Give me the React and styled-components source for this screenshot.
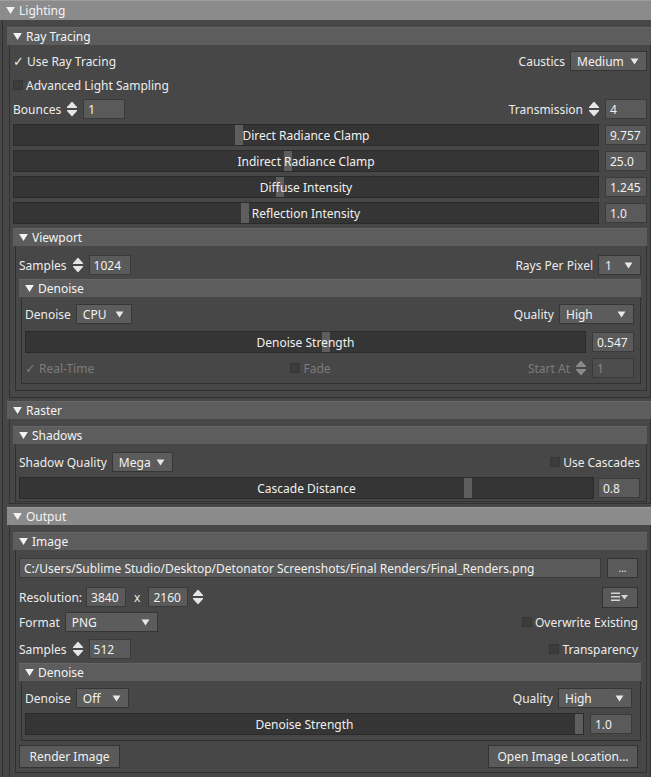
import React from "react";
import styled, { createGlobalStyle } from "styled-components";

const GlobalStyle = createGlobalStyle`
  html, body { margin: 0; padding: 0; background: #474747; }
  body {
    font-family: "Noto Sans", "Open Sans", sans-serif;
    font-size: 12px;
    color: #ececec;
  }
`;

const Panel = styled.div`
  width: 651px;
  height: 777px;
  overflow: hidden;
  background: #474747;
`;

const Wrap = styled.div`
  display: flex;
  flex-direction: column;
`;

const Header = styled.div`
  height: ${(p) => (p.$level === 0 ? 20 : 18)}px;
  display: flex;
  align-items: center;
  gap: 4px;
  padding-left: 6px;
  font-size: 12px;
  color: #f4f4f4;
  background: ${(p) => (p.$tone === "bright" ? "#8b8b8b" : "#5d5d5d")};
  border-top: 1px solid ${(p) => (p.$tone === "bright" ? "#9e9e9e" : "#656565")};
  box-sizing: border-box;
`;

const Body = styled.div`
  display: flex;
  flex-direction: column;
  gap: ${(p) => p.$gap}px;
  margin-left: 2px;
  padding: ${(p) => p.$pt}px ${(p) => p.$pr}px ${(p) => p.$pb}px ${(p) => p.$pl}px;
  border-left: 1px solid #313131;
  border-right: ${(p) => (p.$level === 0 ? "none" : "1px solid #313131")};
  border-bottom: 1px solid #313131;
`;

const Row = styled.div`
  display: flex;
  align-items: center;
  height: ${(p) => p.$h || 20}px;
  flex: none;
  gap: ${(p) => (p.$gap === undefined ? 5 : p.$gap)}px;
  margin-top: ${(p) => p.$mt || 0}px;
  padding-right: ${(p) => p.$pr || 0}px;
  color: ${(p) => (p.$disabled ? "#7c7c7c" : "inherit")};
  white-space: nowrap;
`;

const Spacer = styled.div`
  flex: 1;
`;

const Third = styled.div`
  flex: 1;
  display: flex;
  align-items: center;
  justify-content: ${(p) => p.$justify || "flex-start"};
  gap: 5px;
`;

const Middle = styled.div`
  margin-right: 38px;
  display: flex;
  align-items: center;
`;

const Label = styled.span`
  white-space: nowrap;
  margin: 0 ${(p) => p.$mx || 0}px;
`;

const CheckWrap = styled.label`
  display: inline-flex;
  align-items: center;
  gap: 3px;
  white-space: nowrap;
`;

const Box = styled.span`
  width: 10px;
  height: 10px;
  background: #3c3c3c;
  border: 1px solid #363636;
  box-sizing: border-box;
`;

const Tick = styled.span`
  width: 11px;
  font-family: "DejaVu Sans", sans-serif;
  font-size: 13px;
  line-height: 1;
`;

const Field = styled.div`
  width: ${(p) => (p.$w ? `${p.$w}px` : "auto")};
  flex: ${(p) => (p.$grow ? 1 : "none")};
  height: 20px;
  box-sizing: border-box;
  display: flex;
  align-items: center;
  padding-left: 4px;
  background: ${(p) => (p.$disabled ? "#4d4d4d" : "#5a5a5a")};
  color: ${(p) => (p.$disabled ? "#888" : "#f0f0f0")};
  border: 1px solid #3a3a3a;
  overflow: hidden;
  white-space: nowrap;
`;

const Select = styled.div`
  width: ${(p) => p.$w}px;
  height: 20px;
  box-sizing: border-box;
  display: flex;
  align-items: center;
  justify-content: space-between;
  padding: 0 7px 0 6px;
  background: #5c5c5c;
  border: 1px solid #363636;
  color: #f2f2f2;
`;

const Track = styled.div`
  position: relative;
  flex: 1;
  height: 22px;
  box-sizing: border-box;
  background: #353535;
  border: 1px solid #2b2b2b;
  display: flex;
  align-items: center;
  justify-content: center;
`;

const Handle = styled.div`
  position: absolute;
  top: 0;
  bottom: 0;
  width: 8px;
  background: #5e5e5e;
`;

const TrackText = styled.span`
  position: relative;
  color: #f0f0f0;
`;

const Button = styled.div`
  height: ${(p) => p.$h || 23}px;
  box-sizing: border-box;
  display: flex;
  align-items: center;
  justify-content: center;
  padding: 0 ${(p) => (p.$px === undefined ? 12 : p.$px)}px;
  width: ${(p) => (p.$w ? `${p.$w}px` : "auto")};
  background: #5a5a5a;
  border: 1px solid #333;
  color: #f0f0f0;
  font-size: ${(p) => p.$fs || 12}px;
`;

const Caret = () => (
  <svg width="9" height="7" viewBox="0 0 10 8">
    <polygon points="0,0 10,0 5,8" fill="#f2f2f2" />
  </svg>
);

const SmallCaret = () => (
  <svg width="9" height="7" viewBox="0 0 10 8">
    <polygon points="0.5,0.5 9.5,0.5 5,7.5" fill="#e8e8e8" />
  </svg>
);

const Spin = ({ dim }) => {
  const c = dim ? "#8a8a8a" : "#e6e6e6";
  return (
    <svg width="12" height="18" viewBox="0 0 12 18">
      <path d="M1.5 7.5 L6 2.5 L10.5 7.5 Z M1.5 10.5 L6 15.5 L10.5 10.5 Z" fill={c} stroke={c} strokeLinejoin="round" strokeWidth="1.2" />
    </svg>
  );
};

const MenuIcon = () => (
  <svg width="20" height="12" viewBox="0 0 20 12">
    <rect x="1" y="1.5" width="9" height="1.5" fill="#d6d6d6" />
    <rect x="1" y="5" width="9" height="1.5" fill="#d6d6d6" />
    <rect x="1" y="8.5" width="9" height="1.5" fill="#d6d6d6" />
    <polygon points="11,4 18,4 14.5,8.5" fill="#d6d6d6" />
  </svg>
);

function Section({ title, level, tone = "mid", gap = 4, pt = 7, pb = 4, pl = 3, pr = 3, children }) {
  return (
    <Wrap>
      <Header $level={level} $tone={tone}>
        <Caret />
        {title}
      </Header>
      <Body $level={level} $gap={gap} $pt={pt} $pb={pb} $pl={pl} $pr={pr}>
        {children}
      </Body>
    </Wrap>
  );
}

function Check({ checked, children }) {
  return (
    <CheckWrap>
      {checked ? <Tick>✓</Tick> : <Box />}
      {children}
    </CheckWrap>
  );
}

function Dropdown({ w, value }) {
  return (
    <Select $w={w}>
      <span>{value}</span>
      <SmallCaret />
    </Select>
  );
}

function Slider({ label, value, f, gap = 6, w = 42, mt }) {
  return (
    <Row $h={22} $gap={gap} $mt={mt}>
      <Track>
        <Handle style={{ left: `calc(${f * 100}% - ${f * 8}px)` }} />
        <TrackText>{label}</TrackText>
      </Track>
      <Field $w={w}>{value}</Field>
    </Row>
  );
}

export default function App() {
  return (
    <Panel>
      <GlobalStyle />
      <Section title="Lighting" level={0} tone="bright" gap={3} pt={7} pb={0} pl={4} pr={0}>
        <Section title="Ray Tracing" level={1} gap={4} pt={6} pb={6} pl={3} pr={3}>
          <Row>
            <Check checked>Use Ray Tracing</Check>
            <Spacer />
            <Label>Caustics</Label>
            <Dropdown w={77} value="Medium" />
          </Row>
          <Row>
            <Check>Advanced Light Sampling</Check>
          </Row>
          <Row>
            <Label>Bounces</Label>
            <Spin />
            <Field $w={42}>1</Field>
            <Spacer />
            <Label>Transmission</Label>
            <Spin />
            <Field $w={42}>4</Field>
          </Row>
          <Slider label="Direct Radiance Clamp" value="9.757" f={0.384} mt={1} />
          <Slider label="Indirect Radiance Clamp" value="25.0" f={0.469} />
          <Slider label="Diffuse Intensity" value="1.245" f={0.454} />
          <Slider label="Reflection Intensity" value="1.0" f={0.394} />
          <Section title="Viewport" level={2} gap={4} pt={9} pb={6} pl={3} pr={5}>
            <Row>
              <Label>Samples</Label>
              <Spin />
              <Field $w={42}>1024</Field>
              <Spacer />
              <Label>Rays Per Pixel</Label>
              <Dropdown w={43} value="1" />
            </Row>
            <Section title="Denoise" level={3} gap={5} pt={7} pb={5} pl={3} pr={6}>
              <Row>
                <Label>Denoise</Label>
                <Dropdown w={56} value="CPU" />
                <Spacer />
                <Label>Quality</Label>
                <Dropdown w={75} value="High" />
              </Row>
              <Slider label="Denoise Strength" value="0.547" f={0.537} mt={2} />
              <Row $disabled>
                <Third>
                  <Check checked>Real-Time</Check>
                </Third>
                <Middle>
                  <Check>Fade</Check>
                </Middle>
                <Third $justify="flex-end">
                  <Label>Start At</Label>
                  <Spin dim />
                  <Field $w={42} $disabled>1</Field>
                </Third>
              </Row>
            </Section>
          </Section>
        </Section>

        <Section title="Raster" level={1} gap={5} pt={7} pb={1} pl={3} pr={3}>
          <Section title="Shadows" level={2} gap={5} pt={8} pb={2} pl={3} pr={6}>
            <Row>
              <Label>Shadow Quality</Label>
              <Dropdown w={61} value="Mega" />
              <Spacer />
              <Check>Use Cascades</Check>
            </Row>
            <Slider label="Cascade Distance" value="0.8" f={0.785} gap={4} />
          </Section>
        </Section>

        <Section title="Output" level={1} tone="bright" gap={5} pt={7} pb={4} pl={3} pr={3}>
          <Section title="Image" level={2} gap={4} pt={8} pb={4} pl={3} pr={5}>
            <Row $gap={6} $pr={3}>
              <Field $grow>C:/Users/Sublime Studio/Desktop/Detonator Screenshots/Final Renders/Final_Renders.png</Field>
              <Button $w={31} $h={20} $px={0} $fs={10}>...</Button>
            </Row>
            <Row $mt={5} $gap={4} $pr={3}>
              <Label>Resolution:</Label>
              <Field $w={40}>3840</Field>
              <Label $mx={4}>x</Label>
              <Field $w={40}>2160</Field>
              <Spin />
              <Spacer />
              <Button $w={36} $h={21} $px={0}>
                <MenuIcon />
              </Button>
            </Row>
            <Row $mt={1} $pr={3}>
              <Label>Format</Label>
              <Dropdown w={93} value="PNG" />
              <Spacer />
              <Check>Overwrite Existing</Check>
            </Row>
            <Row $mt={3} $pr={3}>
              <Label>Samples</Label>
              <Spin />
              <Field $w={42}>512</Field>
              <Spacer />
              <Check>Transparency</Check>
            </Row>
            <Section title="Denoise" level={3} gap={5} pt={7} pb={5} pl={3} pr={8}>
              <Row>
                <Label>Denoise</Label>
                <Dropdown w={53} value="Off" />
                <Spacer />
                <Label>Quality</Label>
                <Dropdown w={74} value="High" />
              </Row>
              <Slider label="Denoise Strength" value="1.0" f={1} />
            </Section>
            <Row $h={23} $pr={3}>
              <Button $w={101}>Render Image</Button>
              <Spacer />
              <Button $w={150}>Open Image Location...</Button>
            </Row>
          </Section>
        </Section>
      </Section>
    </Panel>
  );
}
